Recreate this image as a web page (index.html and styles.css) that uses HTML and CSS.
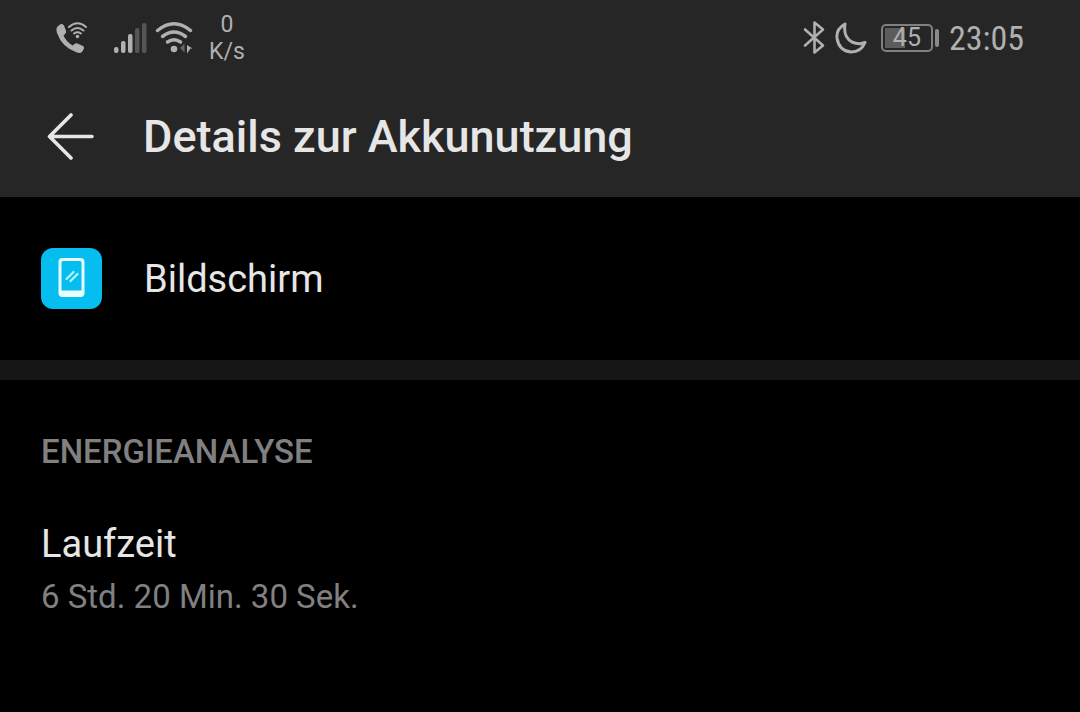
FILE: index.html
```html
<!DOCTYPE html>
<html lang="de">
<head>
    <meta charset="UTF-8">
    <meta name="viewport" content="width=device-width, initial-scale=1.0">
    <title>Details zur Akkunutzung</title>
    <link rel="stylesheet" href="styles.css">
</head>
<body>
    <header class="top">
        <div class="status-bar">
            <div class="status-left">
                <svg class="icon-call" width="32" height="34" viewBox="0 0 32 34" aria-hidden="true">
                    <path fill="#b0b0b0" d="M3 5 L6 3 Q8 2.500 9 4.500 L11 10 Q11.500 12 10 13 L8.500 14.500 Q11 20.500 17.500 24.500 L19.500 23 Q21 22 22.500 22.500 L28 25 Q29.500 26 29 27.500 L27 31 Q25 32.500 22 31.500 Q7 26.500 2 12 Q0.500 7 3 5z"/>
                    <g fill="none" stroke="#b0b0b0" stroke-width="2" stroke-linecap="round">
                        <path d="M14 6 Q22.500 -1.500 31 6"/>
                        <path d="M16.500 9.500 Q22.500 4.500 28.500 9.500"/>
                        <path d="M19 12.500 Q22.500 10 26 12.500"/>
                    </g>
                    <circle cx="22.500" cy="15.500" r="1.800" fill="#b0b0b0"/>
                </svg>
                <svg class="icon-signal" width="34" height="32" viewBox="0 0 34 32" aria-hidden="true">
                    <g fill="#b0b0b0">
                        <rect x="1" y="25" width="4.500" height="6" rx="2"/>
                        <rect x="8" y="19" width="4.500" height="12" rx="2"/>
                        <rect x="15" y="12" width="4.500" height="19" rx="2"/>
                    </g>
                    <g fill="#555">
                        <rect x="22" y="6" width="4.500" height="25" rx="2"/>
                        <rect x="29" y="1" width="4.500" height="30" rx="2"/>
                    </g>
                </svg>
                <svg class="icon-wifi" width="38" height="34" viewBox="0 0 38 34" aria-hidden="true">
                    <g fill="none" stroke="#b0b0b0" stroke-width="3.500" stroke-linecap="round">
                        <path d="M2.500 9.500 Q19 -4 35.500 9.500"/>
                        <path d="M7.500 15.500 Q19 6.500 30.500 15.500"/>
                        <path d="M12.500 21 Q19 16.500 25.500 21"/>
                    </g>
                    <circle cx="19" cy="28" r="3.300" fill="#b0b0b0"/>
                    <path d="M29.500 22.500v9l-4.500 -4.500z" fill="#666"/>
                    <path d="M32 24l5.500 3.500h-2l-3.500 5z" fill="#b0b0b0"/>
                </svg>
                <div class="net-speed">0<br>K/s</div>
            </div>
            <div class="status-right">
                <svg class="icon-bluetooth" width="22" height="34" viewBox="0 0 22 34" aria-hidden="true">
                    <path d="M2 8.500l18 16l-8.500 7v-30l8.500 7l-18 16" fill="none" stroke="#b0b0b0" stroke-width="2.600" stroke-linejoin="round" stroke-linecap="round"/>
                </svg>
                <svg class="icon-moon" width="32" height="32" viewBox="0 0 32 32" aria-hidden="true">
                    <path d="M10 2 Q1 7 2 16 Q4 29 16 30 Q26 30 30 20.500 Q24 23 17 20 Q8 15 10 2z" fill="none" stroke="#b0b0b0" stroke-width="3" stroke-linejoin="round"/>
                </svg>
                <div class="battery">
                    <div class="battery-case">
                        <div class="battery-level" style="width: 45%"></div>
                        <span class="battery-text">45</span>
                    </div>
                    <div class="battery-cap"></div>
                </div>
                <time class="clock">23:05</time>
            </div>
        </div>
        <div class="app-bar">
            <button class="back-btn" type="button" aria-label="Zurück">
                <svg width="48" height="48" viewBox="0 0 48 48" aria-hidden="true">
                    <path d="M24 2L2.500 23.500L24 45M2.500 23.500H45" fill="none" stroke="#e6e6e6" stroke-width="3.600" stroke-linecap="round" stroke-linejoin="round"/>
                </svg>
            </button>
            <h1>Details zur Akkunutzung</h1>
        </div>
    </header>

    <main>
        <section class="app-row">
            <svg class="app-icon" width="61" height="61" viewBox="0 0 61 61" aria-hidden="true">
                <rect width="61" height="61" rx="12" fill="#06bdf0"/>
                <path fill="#e8ffff" fill-rule="evenodd" d="M21.500 10h18a4 4 0 0 1 4 4v31a4 4 0 0 1 -4 4h-18a4 4 0 0 1 -4 -4v-31a4 4 0 0 1 4 -4zM22 13a1.500 1.500 0 0 0 -1.500 1.500v28h20v-28a1.500 1.500 0 0 0 -1.500 -1.500z"/>
                <path d="M25.500 31L32.500 24M29.500 33L36.500 26" stroke="#b5f6fc" stroke-width="2.200" stroke-linecap="round"/>
            </svg>
            <h2>Bildschirm</h2>
        </section>

        <section class="analysis">
            <h3>ENERGIEANALYSE</h3>
            <p class="item-title">Laufzeit</p>
            <p class="item-value">6 Std. 20 Min. 30 Sek.</p>
        </section>
    </main>
</body>
</html>
```

FILE: styles.css
```css
body {
    margin: 0;
    background-color: #000;
    color: #e6e6e6;
    font-family: Roboto, sans-serif;
}

h1, h2, h3, p {
    margin: 0;
    font-weight: 400;
}

svg {
    display: block;
    flex-shrink: 0;
}

.top {
    background-color: #262626;
}

/* status bar */
.status-bar {
    display: flex;
    justify-content: space-between;
    align-items: center;
    height: 76px;
    padding: 0 56px 0 55px;
    color: #b0b0b0;
}

.status-left, .status-right {
    display: flex;
    align-items: center;
}

.icon-call {
    margin-right: 26px;
}

.icon-signal {
    margin-right: 8px;
}

.icon-wifi {
    margin-right: 16px;
}

.net-speed {
    font-size: 23px;
    line-height: 27px;
    text-align: center;
}

.status-right {
    gap: 10px;
}

.battery {
    display: flex;
    align-items: center;
    gap: 2px;
    margin-left: 4px;
}

.battery-case {
    position: relative;
    box-sizing: border-box;
    width: 52px;
    height: 28px;
    padding: 2px;
    border: 2px solid #808080;
    border-radius: 5px;
}

.battery-level {
    height: 100%;
    background-color: #5c5c5c;
}

.battery-text {
    position: absolute;
    inset: 0;
    font-size: 25px;
    line-height: 24px;
    text-align: center;
}

.battery-cap {
    width: 4px;
    height: 18px;
    border-radius: 2px;
    background-color: #8a8a8a;
}

.clock {
    font-family: "Roboto Condensed", Roboto, sans-serif;
    font-size: 34px;
    line-height: 42px;
}

/* title bar */
.app-bar {
    display: flex;
    align-items: center;
    gap: 48px;
    padding: 31px 47px 30px;
}

.back-btn {
    padding: 0;
    border: none;
    background: none;
    cursor: pointer;
}

.app-bar h1 {
    font-size: 45px;
    font-weight: 500;
    line-height: 60px;
}

/* content */
.app-row {
    display: flex;
    align-items: center;
    gap: 42px;
    padding: 51px 41px;
    border-bottom: 20px solid #161616;
}

.app-row h2 {
    font-size: 38px;
    line-height: 48px;
}

.analysis {
    padding: 52px 41px;
}

.analysis h3 {
    margin-bottom: 48px;
    color: #808080;
    font-size: 33px;
    font-weight: 500;
    line-height: 40px;
}

.item-title {
    margin-bottom: 9px;
    font-size: 38px;
    line-height: 48px;
}

.item-value {
    color: #808080;
    font-size: 33px;
    line-height: 40px;
}
```
